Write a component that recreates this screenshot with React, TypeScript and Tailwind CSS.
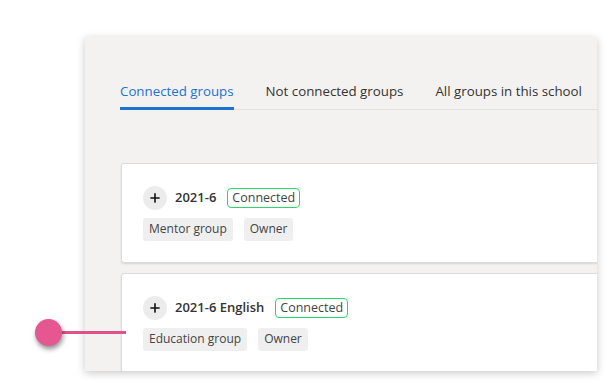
import { Plus } from 'lucide-react';

interface Group {
  name: string;
  type: string;
}

const groups: Group[] = [
  { name: '2021-6', type: 'Mentor group' },
  { name: '2021-6 English', type: 'Education group' },
];

const tabs = ['Connected groups', 'Not connected groups', 'All groups in this school'];

const GroupCard = ({ group }: { group: Group }) => (
  <div className="w-[520px] h-[100px] shrink-0 bg-white rounded-[3px] border border-[#dcdcdc] shadow-[0_1px_2px_rgba(0,0,0,0.12)] px-[21px] pt-[22px]">
    <div className="flex items-center h-[24px]">
      <div className="w-[24px] h-[24px] rounded-full bg-[#ececec] flex items-center justify-center">
        <Plus className="w-[14px] h-[14px] text-[#111]" strokeWidth={2.75} />
      </div>
      <span className="ml-[8px] text-[13px] font-semibold text-[#333]">{group.name}</span>
      <span className="ml-[11px] h-[20px] px-[4px] flex items-center rounded-[4px] border-[1.5px] border-[#2ad86a] text-[12.5px] text-[#444]">
        Connected
      </span>
    </div>
    <div className="flex gap-[11px] mt-[8px]">
      <span className="h-[23px] px-[6px] flex items-center rounded-[3px] bg-[#efefef] text-[12px] text-[#444]">
        {group.type}
      </span>
      <span className="h-[23px] px-[6px] flex items-center rounded-[3px] bg-[#efefef] text-[12px] text-[#444]">
        Owner
      </span>
    </div>
  </div>
);

const App = () => {
  return (
    <div
      className="relative w-[616px] h-[390px] bg-white overflow-hidden"
      style={{ fontFamily: '"Open Sans", "Liberation Sans", sans-serif' }}
    >
      <div className="absolute left-[85px] top-[37px] w-[512px] h-[334px] bg-[#f3f2f1] overflow-hidden shadow-[0_2px_8px_rgba(0,0,0,0.22)]">
        <div className="ml-[35px] mt-[45px] flex border-b border-[#e2e1e0]">
          {tabs.map((t, i) => (
            <div
              key={t}
              className={
                i === 0
                  ? 'mr-[32px] pb-[4px] text-[13.3px] text-[#1a73d1] border-b-[3px] border-[#1a73d1] -mb-[1px] whitespace-nowrap'
                  : 'mr-[32px] pb-[7px] text-[13.3px] text-[#333] whitespace-nowrap'
              }
            >
              {t}
            </div>
          ))}
        </div>
        <div className="ml-[36px] mt-[53px] flex flex-col gap-[10px]">
          {groups.map((g) => (
            <GroupCard key={g.name} group={g} />
          ))}
        </div>
      </div>
      <div className="absolute left-[61px] top-[331px] w-[65px] h-[3px] bg-[#e0508a]" />
      <div className="absolute left-[35px] top-[319px] w-[27px] h-[27px] rounded-full bg-[#e65690] shadow-[1px_3px_5px_rgba(0,0,0,0.45)]" />
    </div>
  );
};

export default App;
